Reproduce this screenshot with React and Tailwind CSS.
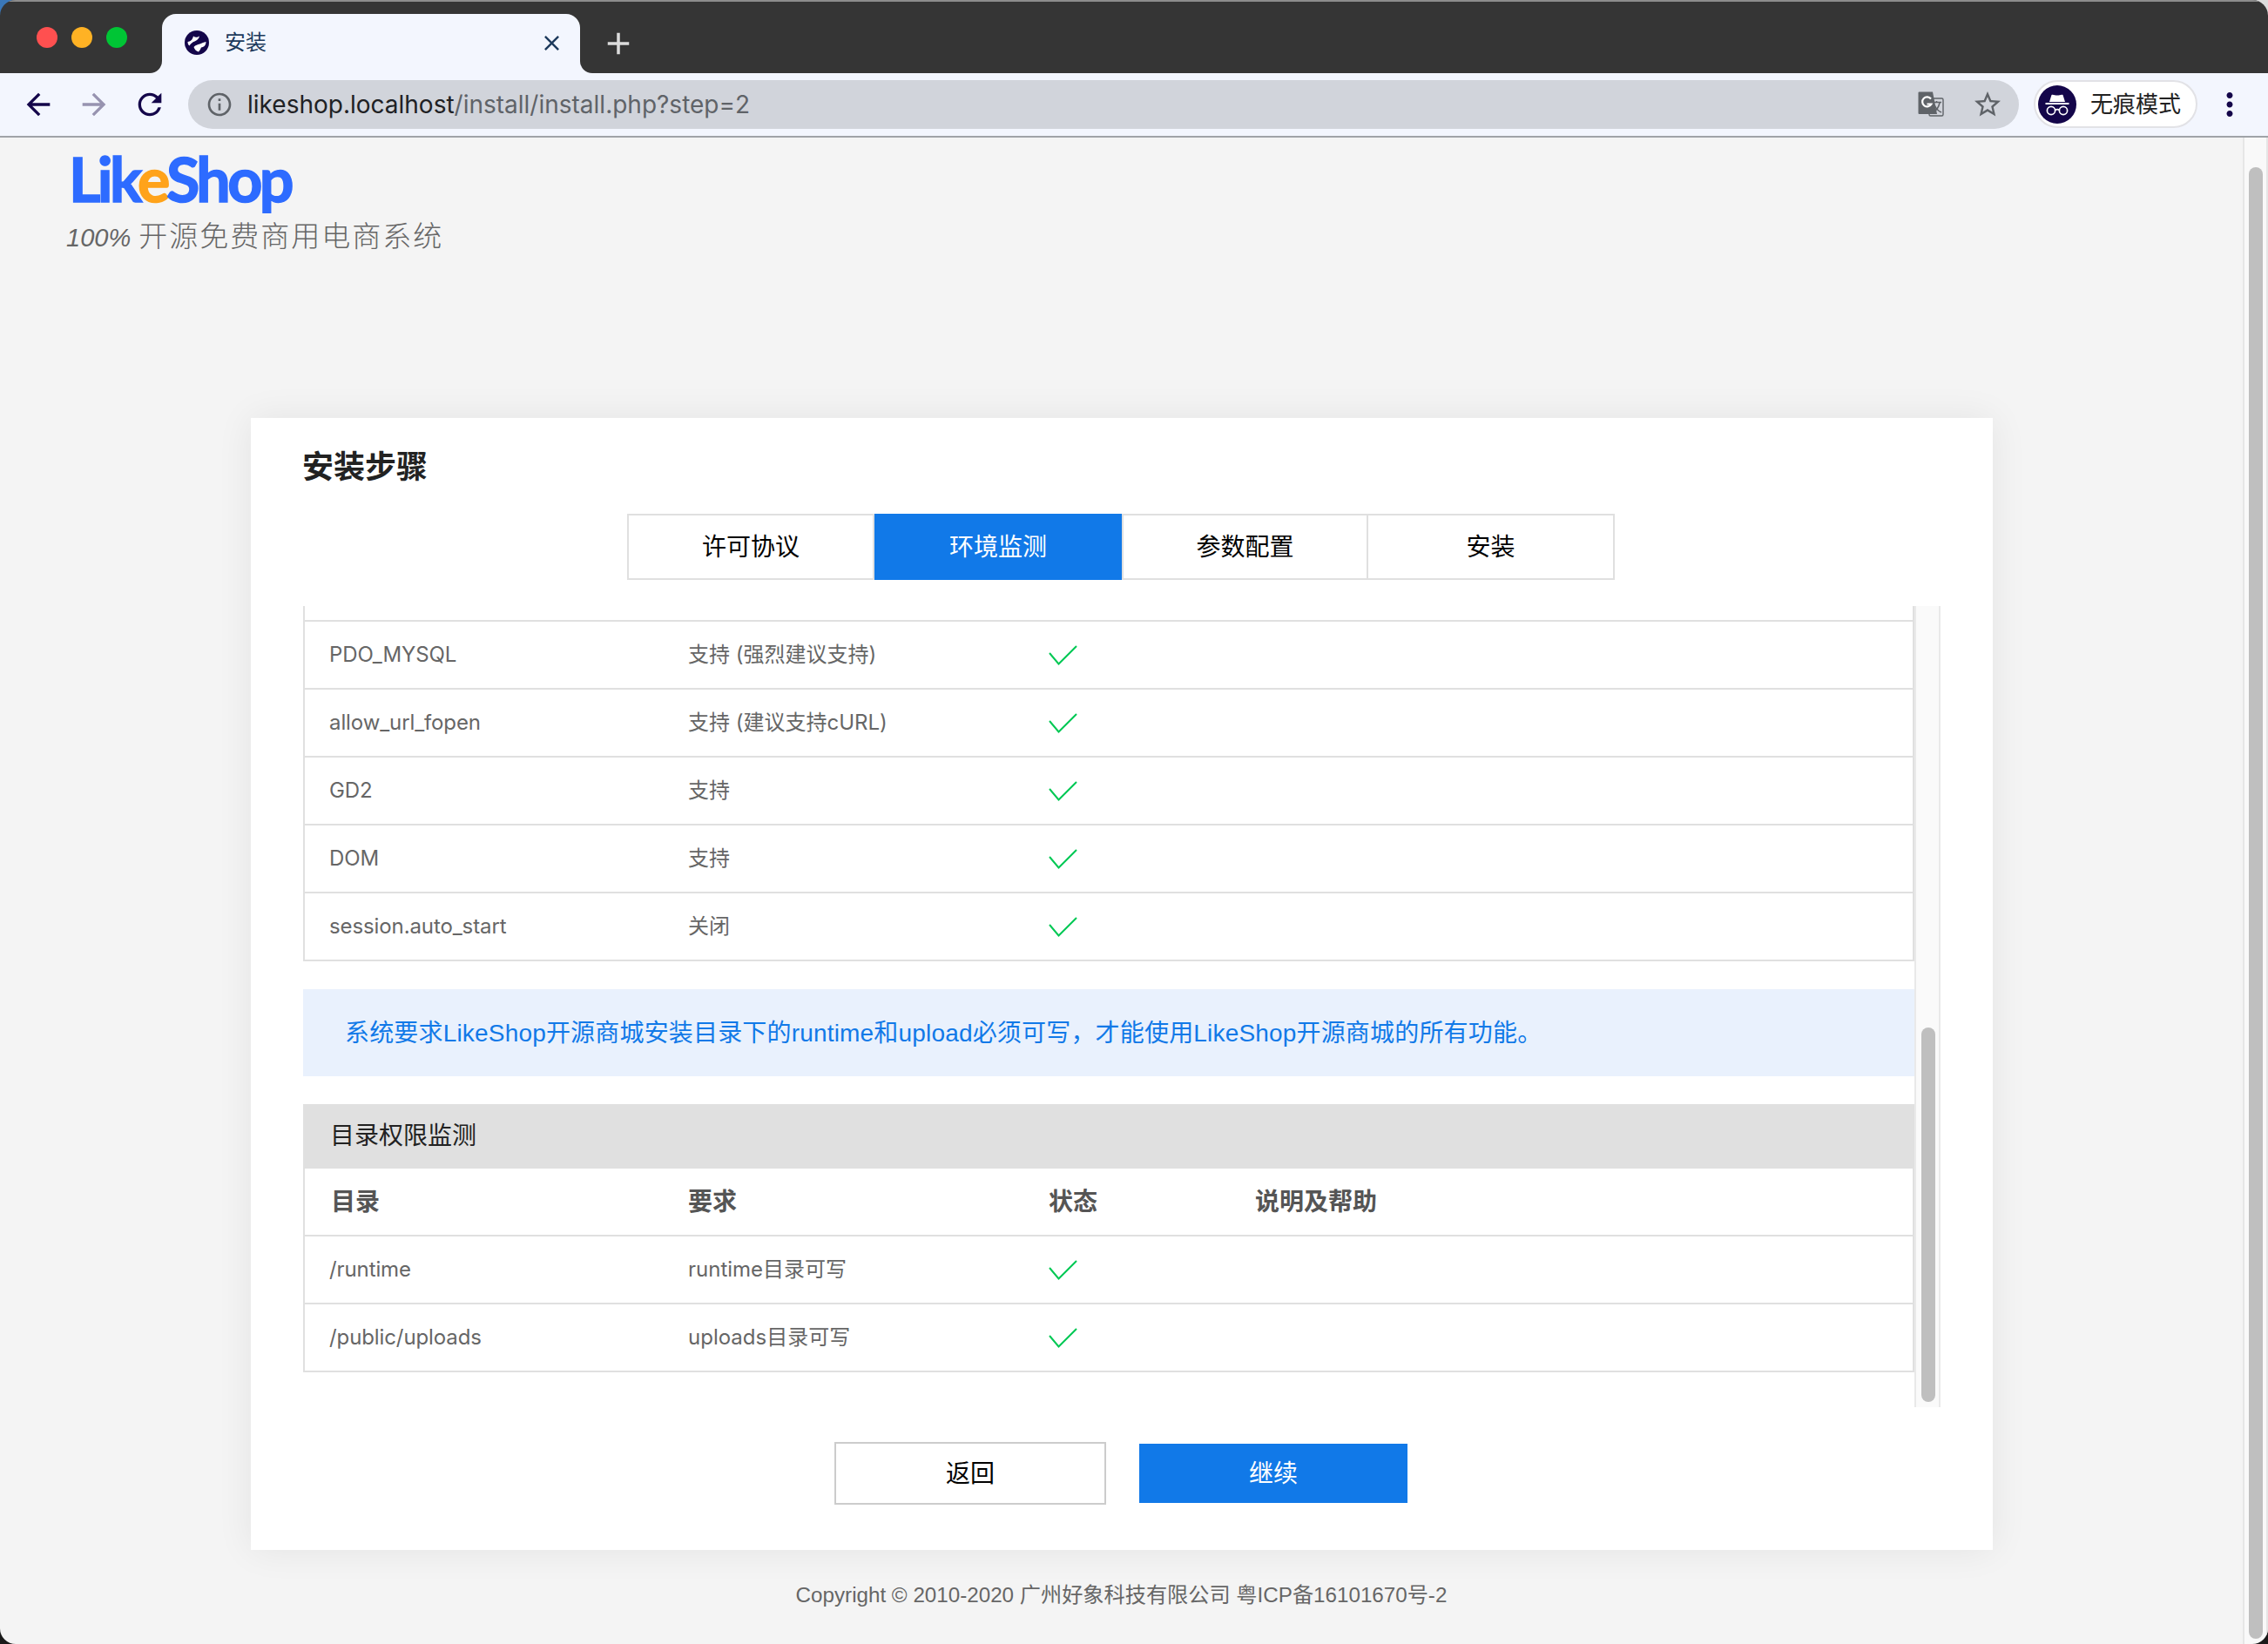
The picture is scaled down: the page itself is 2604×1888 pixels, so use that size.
import React from "react";
import { MdArrowBack, MdArrowForward, MdRefresh, MdClose, MdAdd, MdInfoOutline, MdStarBorder, MdMoreVert } from "react-icons/md";

const font = "[font-family:'Liberation_Sans','Noto_Sans_CJK_SC',sans-serif]";
const inter = "[font-family:Inter,'Noto_Sans_CJK_SC',sans-serif]";

function Check() {
  return (
    <svg width="33" height="23" viewBox="0 0 33 23" fill="none" className="block">
      <path d="M1 9 L11.5 21.5 L32 1" stroke="#00c853" strokeWidth="2" />
    </svg>
  );
}

function Row({ a, b }) {
  return (
    <div className={`flex h-[78px] items-center border-x-2 border-b-2 border-[#e0e0e0] bg-white pl-[28px] text-[24px] text-[#666666] ${inter}`}>
      <div className="w-[412px] tracking-[-0.1px]">{a}</div>
      <div className="w-[414px]">{b}</div>
      <div className="w-[237px]"><Check /></div>
    </div>
  );
}

function Tab({ label, active, className }) {
  return (
    <div className={`flex h-full items-center justify-center pt-[2px] text-[28px] ${active ? "bg-[#1179e8] text-white" : "border-y-2 border-[#e0e0e0] text-black"} ${className}`}>
      {label}
    </div>
  );
}

function GlobeIcon() {
  return (
    <svg width="28" height="28" viewBox="0 0 28 28" className="shrink-0">
      <circle cx="14" cy="14" r="14" fill="#14064a" />
      <path d="M3.5 13 C6.5 12.5 9 11 10 6.5 C12 8 14 8.5 17 6.5 C16.5 9.5 14 11.5 11.5 12.5 C9 13.5 7 15 5.5 17.5 C4.2 16.5 3.5 15 3.5 13 Z" fill="#ffffff" />
      <path d="M10.5 19 C12.5 16.5 15 16.5 17.5 15.5 C20 14.5 22 13.5 24.5 13 C24.5 16.5 22.5 19 19 19.5 C18 21.5 17.5 23 16 24.5 C13.5 24 11.5 22 10.5 19 Z" fill="#ffffff" />
    </svg>
  );
}

function TranslateIcon() {
  return (
    <svg width="30" height="30" viewBox="0 0 30 30" fill="none">
      <rect x="13" y="8" width="16" height="20" rx="1.5" fill="#d1d4db" stroke="#5f6368" strokeWidth="1.4" />
      <path d="M1.5 0.5 H17 L22 26 H1.5 A1 1 0 0 1 0.5 25 V1.5 A1 1 0 0 1 1.5 0.5 Z" fill="#5f6368" />
      <path d="M15 8.5 A5.5 5.5 0 1 0 15.5 14.5 H10.5" stroke="#ffffff" strokeWidth="2.2" fill="none" />
      <path d="M16.5 12.5 H27 M21.5 11 V13 M25 13 C24 18 21 22 17.5 24 M19 15.5 C20.5 19 23 22.5 27 24" stroke="#5f6368" strokeWidth="1.5" fill="none" />
    </svg>
  );
}

function IncognitoIcon() {
  return (
    <svg width="44" height="44" viewBox="0 0 44 44" className="shrink-0">
      <circle cx="22" cy="22" r="22" fill="#14064a" />
      <path d="M15.5 11 C17 10 19.5 11.5 22 11.5 C24.5 11.5 27 10 28.5 11 L31 19 H13 Z" fill="#ffffff" />
      <rect x="8.5" y="20" width="27" height="2" fill="#ffffff" />
      <circle cx="15" cy="29" r="4.6" fill="none" stroke="#ffffff" strokeWidth="1.7" />
      <circle cx="29" cy="29" r="4.6" fill="none" stroke="#ffffff" strokeWidth="1.7" />
      <path d="M19.5 28.5 C21 27.5 23 27.5 24.5 28.5" fill="none" stroke="#ffffff" strokeWidth="1.7" />
    </svg>
  );
}

function Chrome() {
  return (
    <>
      <div className="flex h-[84px] shrink-0 items-end border-t-2 border-[#8c8c8c] bg-[#353535]">
        <div className="flex h-[82px] w-[186px] items-start gap-[16px] pl-[42px] pt-[29px]">
          <span className="h-[24px] w-[24px] rounded-full bg-[#ff5050]" />
          <span className="h-[24px] w-[24px] rounded-full bg-[#ffb224]" />
          <span className="h-[24px] w-[24px] rounded-full bg-[#00c535]" />
        </div>
        <div className="relative flex h-[68px] w-[480px] items-center rounded-t-[16px] bg-[#f3f6fe] pl-[26px] pb-[2px]">
          <div className="absolute bottom-0 -left-[14px] h-[14px] w-[14px] bg-[#f3f6fe]"><div className="h-full w-full rounded-br-[14px] bg-[#353535]" /></div>
          <div className="absolute bottom-0 -right-[14px] h-[14px] w-[14px] bg-[#f3f6fe]"><div className="h-full w-full rounded-bl-[14px] bg-[#353535]" /></div>
          <GlobeIcon />
          <span className="ml-[18px] text-[24px] text-[#1d3a5c]">安装</span>
          <MdClose size={29} color="#1d3a5c" className="ml-auto mr-[18px]" />
        </div>
        <MdAdd size={42} color="#dcdcdc" className="mb-[13px] ml-[23px]" />
      </div>
      <div className="flex h-[74px] shrink-0 items-start border-b-2 border-[#a0a3a8] bg-[#f3f6fe]">
        <div className="flex h-[72px] w-[216px] items-center pl-[24px]">
          <MdArrowBack size={40} color="#14064a" />
          <MdArrowForward size={40} color="#9793b0" className="ml-[24px]" />
          <MdRefresh size={40} color="#14064a" className="ml-[24px]" />
        </div>
        <div className="mt-[8px] flex h-[56px] w-[2102px] items-center rounded-full bg-[#d1d4db] pl-[20px] pr-[18px]">
          <MdInfoOutline size={32} color="#5f6368" />
          <span className={`ml-[16px] text-[28px] text-[#202124] ${inter}`}>likeshop.localhost<span className="text-[#5f6368]">/install/install.php?step=2</span></span>
          <div className="ml-auto flex items-center gap-[32px]">
            <TranslateIcon />
            <MdStarBorder size={36} color="#5f6368" />
          </div>
        </div>
        <div className="mt-[8px] ml-[17px] flex h-[55px] w-[188px] items-center rounded-full border-2 border-[#e2e2e6] bg-white pl-[3px]">
          <IncognitoIcon />
          <span className="ml-[16px] pt-[1px] text-[26px] text-[#222222]">无痕模式</span>
        </div>
        <MdMoreVert size={42} color="#14064a" className="ml-[16px] mt-[15px]" />
      </div>
    </>
  );
}

export default function App() {
  const rows = [
    ["PDO_MYSQL", "支持 (强烈建议支持)"],
    ["allow_url_fopen", "支持 (建议支持cURL)"],
    ["GD2", "支持"],
    ["DOM", "支持"],
    ["session.auto_start", "关闭"],
  ];
  return (
    <div className={`h-[1888px] w-[2604px] overflow-hidden bg-[linear-gradient(to_bottom,transparent_40px,#1a1a1a_40px),linear-gradient(to_right,#3a77b8_50%,#dcdcdc_50%)] ${font}`}>
      <div className="flex h-full w-full flex-col overflow-hidden rounded-[18px]">
        <Chrome />
        <div className="flex min-h-0 flex-1">
          <main className="flex w-[2575px] flex-col bg-[#f4f4f4]">
            <div className="h-[322px] pl-[76px] pt-[16px]">
              <div className="pl-[3px] text-[70px] font-bold leading-[62px] tracking-[-3.6px] text-[#2d6bff] [font-family:Lato,sans-serif] [-webkit-text-stroke:1.5px_currentColor]">
                Lik<span className="text-[#ffa31a]">e</span>Shop
              </div>
              <div className="mt-[16px] flex items-baseline text-[33px] font-light leading-[40px] tracking-[2px] text-[#666666]">
                <span className="mr-[9px] text-[29px] italic tracking-normal">100%</span>
                <span>开源免费商用电商系统</span>
              </div>
            </div>
            <section className="ml-[288px] flex h-[1300px] w-[2000px] flex-col bg-white px-[60px] pt-[32px] shadow-[0_0_40px_rgba(0,0,0,0.07)]">
              <h1 className="-ml-[1px] pt-[1px] text-[36px] font-bold leading-[48px] text-[#222222]">安装步骤</h1>
              <div className="ml-[372px] mt-[29px] flex h-[76px] w-[1134px]">
                <Tab label="许可协议" className="w-[284px] border-x-2" />
                <Tab label="环境监测" active className="w-[284px]" />
                <Tab label="参数配置" className="w-[283px] border-x-2" />
                <Tab label="安装" className="w-[283px] border-r-2" />
              </div>
              <div className="mt-[30px] flex h-[920px] w-[1880px] overflow-hidden">
                <div className="w-[1850px]">
                  <div className="h-[18px] border-x-2 border-b-2 border-[#e0e0e0]" />
                  {rows.map((r) => <Row key={r[0]} a={r[0]} b={r[1]} />)}
                  <div className="mt-[32px] flex h-[100px] items-center bg-[#e9f1fd] pl-[48px] pt-[2px] text-[28px] tracking-[0.18px] text-[#1179e8]">
                    系统要求LikeShop开源商城安装目录下的runtime和upload必须可写，才能使用LikeShop开源商城的所有功能。
                  </div>
                  <div className="mt-[32px] flex h-[74px] items-center bg-[#e0e0e0] pl-[31px] text-[28px] text-[#222222]">目录权限监测</div>
                  <div className="flex h-[78px] items-center border-x-2 border-b-2 border-[#e0e0e0] pl-[30px] pt-[2px] text-[28px] font-bold text-[#555555]">
                    <div className="w-[410px]">目录</div>
                    <div className="w-[414px]">要求</div>
                    <div className="w-[237px]">状态</div>
                    <div>说明及帮助</div>
                  </div>
                  <Row a="/runtime" b="runtime目录可写" />
                  <Row a="/public/uploads" b="uploads目录可写" />
                </div>
                <div className="flex h-full w-[30px] flex-col border-x-2 border-[#e9e9e9] bg-[#fafafa] pl-[6px] pr-[4px] pb-[6px] pt-[484px]">
                  <div className="w-[16px] flex-1 rounded-full bg-[#bfbfbf]" />
                </div>
              </div>
              <div className="ml-[610px] mt-[40px] flex h-[72px] items-center">
                <button className="flex h-[72px] w-[312px] items-center justify-center border-2 border-[#cccccc] bg-white pt-[2px] text-[28px] text-black">返回</button>
                <button className="ml-[38px] flex h-[68px] w-[308px] items-center justify-center bg-[#1179e8] pt-[2px] text-[28px] text-white">继续</button>
              </div>
            </section>
            <footer className="flex flex-1 justify-center pt-[38px] text-[24.2px] leading-[28px] text-[#666666]">
              Copyright © 2010-2020 广州好象科技有限公司 粤ICP备16101670号-2
            </footer>
          </main>
          <div className="flex w-[29px] flex-col border-x-2 border-[#e6e6e6] bg-[#f9f9f9] pb-[6px] pl-[5px] pt-[34px]">
            <div className="w-[16px] flex-1 rounded-full bg-[#bfbfbf]" />
          </div>
        </div>
      </div>
    </div>
  );
}
